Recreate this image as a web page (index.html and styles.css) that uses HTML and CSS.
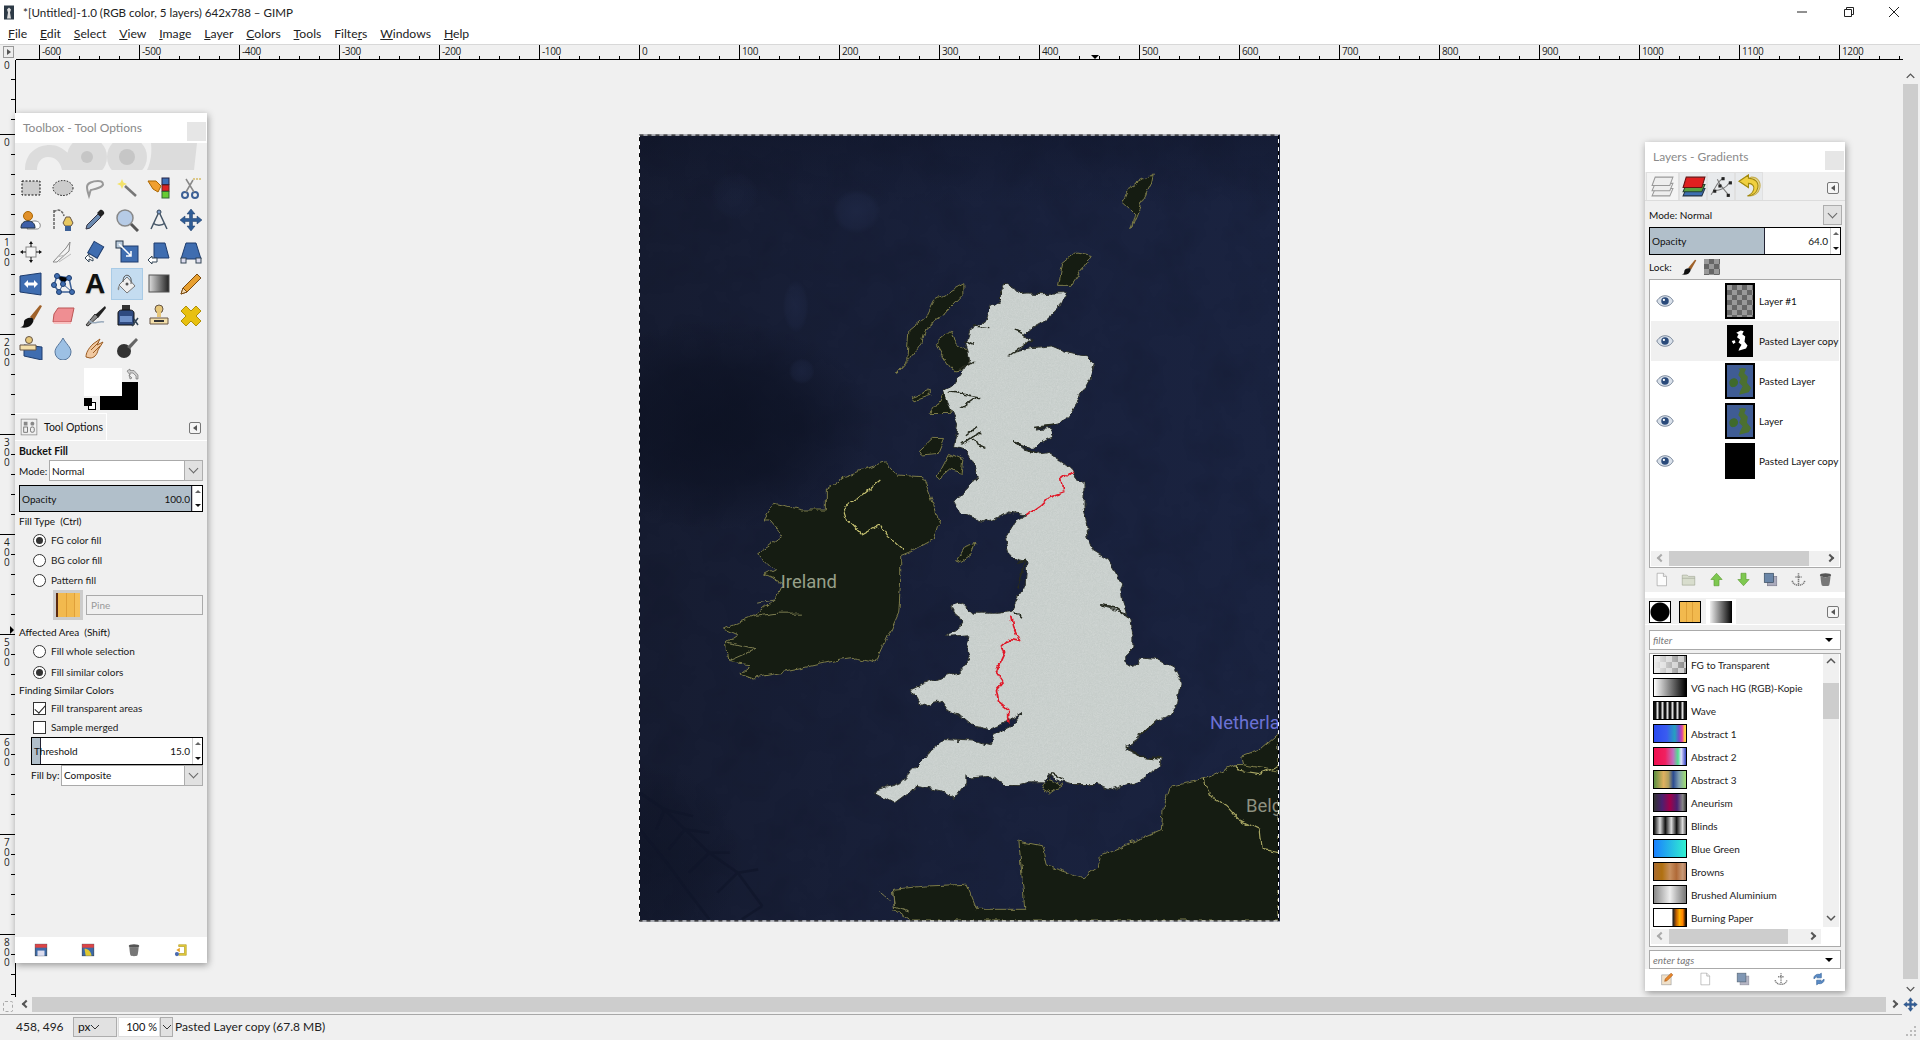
FILE: index.html
```html
<!DOCTYPE html>
<html lang="en">
<head>
<meta charset="utf-8">
<title>GIMP</title>
<link rel="stylesheet" href="styles.css">
</head>
<body>
<svg class="defs" width="0" height="0" aria-hidden="true">
<defs>
<symbol id="i-rect" viewBox="0 0 24 24"><rect x="3" y="5" width="18" height="14" fill="#ccc" stroke="#111" stroke-dasharray="2 1.5"/></symbol>
<symbol id="i-ell" viewBox="0 0 24 24"><ellipse cx="12" cy="12" rx="10" ry="7.5" fill="#ccc" stroke="#111" stroke-dasharray="1.5 1.5"/></symbol>
<symbol id="i-lasso" viewBox="0 0 24 24"><path d="M4 11c0-4 6-6 11-6s6 3 4 5-7 3-11 4c-1 1-1 3-2 6-1-3-2-6-2-9z" fill="none" stroke="#999" stroke-width="2"/></symbol>
<symbol id="i-wand" viewBox="0 0 24 24"><path d="M10 10l11 10" stroke="#777" stroke-width="2.500"/><path d="M7 3l1.500 3.500L12 8 8.500 9.500 7 13 5.500 9.500 2 8l3.500-1.500z" fill="#f4e36a"/></symbol>
<symbol id="i-fuzzy" viewBox="0 0 24 24"><rect x="15" y="2" width="7" height="6.500" fill="#3c6eb4" stroke="#224"/><rect x="15" y="9" width="7" height="6" fill="#d22" stroke="#622"/><rect x="15" y="15.500" width="7" height="6.500" fill="#6c3" stroke="#363"/><path d="M1 5h8l5 5-3 6-5-3z" fill="#f0a030" stroke="#a60"/></symbol>
<symbol id="i-sciss" viewBox="0 0 24 24"><circle cx="6" cy="19" r="3" fill="none" stroke="#3c6096" stroke-width="2"/><circle cx="16" cy="19" r="3" fill="none" stroke="#3c6096" stroke-width="2"/><path d="M7 16L14 4M15 16L7 3" stroke="#888" stroke-width="1.500"/><path d="M14 3h8" stroke="#c8a020" stroke-dasharray="2 1"/></symbol>
<symbol id="i-fg" viewBox="0 0 24 24"><path d="M12 14c3-2 8-1 9 2s-1 5-3 5H8z" fill="#fff" stroke="#888"/><circle cx="9" cy="8" r="4.500" fill="#e0902a" stroke="#a60"/><path d="M2 20c0-5 3-7 7-7s7 2 7 7z" fill="#3d5fa8" stroke="#234"/></symbol>
<symbol id="i-path" viewBox="0 0 24 24"><path d="M3 2v20M3 4c3-3 8-3 10 4" fill="none" stroke="#666" stroke-dasharray="3 1" stroke-width="1.500"/><path d="M15 9l4 0 3 6-2 3h-6l-2-3z" fill="#e8c860" stroke="#654"/><rect x="14" y="18" width="6" height="5" fill="#3c6096"/></symbol>
<symbol id="i-pick" viewBox="0 0 24 24"><path d="M3 21l1-4L15 6l3 3L7 20z" fill="#6b8ab0" stroke="#334"/><path d="M14 5l3-3c2-1 5 2 4 4l-3 3z" fill="#222"/></symbol>
<symbol id="i-zoom" viewBox="0 0 24 24"><circle cx="10" cy="10" r="8" fill="#b6cbe6" stroke="#888" stroke-width="1.500"/><path d="M16 16l7 7" stroke="#555" stroke-width="3"/></symbol>
<symbol id="i-comp" viewBox="0 0 24 24"><circle cx="12" cy="4" r="2" fill="#7c9cc8" stroke="#345"/><path d="M11 6L4 21M13 6l7 15M6 15c3 3 9 3 12 0" fill="none" stroke="#456" stroke-width="1.500"/></symbol>
<symbol id="i-move" viewBox="0 0 24 24"><path d="M12 1l4 5h-2.500v4.500H18V8l5 4-5 4v-2.500h-4.500V18H16l-4 5-4-5h2.500v-4.500H6V16l-5-4 5-4v2.500h4.500V6H8z" fill="#2f5c96" stroke="#1a3a66" stroke-width=".5"/></symbol>
<symbol id="i-align" viewBox="0 0 24 24"><rect x="7" y="7" width="10" height="10" fill="#f6f6f6" stroke="#888"/><path d="M12 1l2 3h-4zM12 23l-2-3h4zM1 12l3-2v4zM23 12l-3 2v-4z" fill="#111"/><path d="M12 4v3M12 17v3M4 12h3M17 12h3" stroke="#111"/></symbol>
<symbol id="i-crop" viewBox="0 0 24 24"><path d="M2 22L15 8l4-6-1 9L6 22z" fill="#f4f4f4" stroke="#888"/><path d="M8 22l12-8M6 17l8-2" stroke="#bbb"/></symbol>
<symbol id="i-rot" viewBox="0 0 24 24"><rect x="7" y="3" width="11" height="13" transform="rotate(30 12 10)" fill="#3f6db0" stroke="#1e3d6e"/><path d="M2 18l4-4v2.500l4 2V21l-4-2v3z" fill="#fff" stroke="#345"/></symbol>
<symbol id="i-scale" viewBox="0 0 24 24"><rect x="6" y="6" width="17" height="16" fill="#3f6db0" stroke="#1e3d6e"/><rect x="1" y="1" width="7" height="7" fill="#bcd" stroke="#234"/><path d="M4 4l12 12m0-5v5h-5" fill="none" stroke="#fff" stroke-width="1.500"/></symbol>
<symbol id="i-shear" viewBox="0 0 24 24"><path d="M7 3h11l4 15H7z" fill="#3f6db0" stroke="#1e3d6e"/><path d="M1 20l4-4v2h5v4H5v2z" fill="#fff" stroke="#345"/></symbol>
<symbol id="i-persp" viewBox="0 0 24 24"><path d="M7 3h10l5 16H2z" fill="#3f6db0" stroke="#1e3d6e"/><rect x="2" y="18" width="5" height="5" fill="#dde" stroke="#345"/><rect x="17" y="18" width="5" height="5" fill="#dde" stroke="#345"/></symbol>
<symbol id="i-flip" viewBox="0 0 24 24"><path d="M1 4l21-3v22L1 20z" fill="#3f6db0" stroke="#1e3d6e"/><path d="M5 12l4-4v2.500h6V8l4 4-4 4v-2.500H9V16z" fill="#fff"/></symbol>
<symbol id="i-cage" viewBox="0 0 24 24"><path d="M6 4l12 2 3 14H8L3 13z" fill="none" stroke="#3c6096" stroke-width="1.500"/><path d="M6 4l6 8 6-6M12 12l-4 8M12 12l9 8" stroke="#3c6096"/><g fill="#3f6db0" stroke="#1e3d6e"><circle cx="6" cy="4" r="2.500"/><circle cx="18" cy="6" r="2.500"/><circle cx="21" cy="20" r="2.500"/><circle cx="8" cy="20" r="2.500"/><circle cx="3" cy="13" r="2.500"/><circle cx="12" cy="12" r="2.500"/></g></symbol>
<symbol id="i-bucket" viewBox="0 0 24 24"><path d="M4 13l8-8 8 9-8 7z" fill="#eee" stroke="#777"/><path d="M8 10c0-6 3-8 6-6 3 2 2 6 2 8" fill="none" stroke="#555"/><circle cx="12" cy="12" r="1.500" fill="#555"/><path d="M4 13c-1 2-2 4-1 5s2-2 1-5" fill="#888"/></symbol>
<symbol id="i-blend" viewBox="0 0 24 24"><defs><linearGradient id="g-b"><stop offset="0" stop-color="#ddd"/><stop offset="1" stop-color="#222"/></linearGradient></defs><rect x="2" y="3" width="20" height="17" fill="url(#g-b)" stroke="#555"/></symbol>
<symbol id="i-pencil" viewBox="0 0 24 24"><path d="M2 22l2-6L18 2l4 4L8 20z" fill="#e8a030" stroke="#7a4a10"/><path d="M2 22l2-6 4 4z" fill="#f0d8b0" stroke="#7a4a10"/></symbol>
<symbol id="i-brush" viewBox="0 0 24 24"><path d="M11 13L21 1l2 1-8 14z" fill="#a0622a"/><path d="M1 23c3 0 4-2 4-5s5-5 8-4 1 6-2 8-7 2-10 1z" fill="#111"/></symbol>
<symbol id="i-eraser" viewBox="0 0 24 24"><path d="M7 4h16l-3 14H2l1-8z" fill="#ef8e92" stroke="#b55"/><path d="M2 18h18v2H3z" fill="#f8c0c0"/></symbol>
<symbol id="i-air" viewBox="0 0 24 24"><path d="M12 11L22 2l1 2-8 10z" fill="#222"/><path d="M3 21l9-11 3 3-10 9z" fill="#888" stroke="#333"/><path d="M6 16c4 6 10 0 15 2" fill="none" stroke="#9ab" stroke-width="1.500"/></symbol>
<symbol id="i-ink" viewBox="0 0 24 24"><rect x="7" y="1" width="8" height="6" fill="#333"/><path d="M3 9c0-2 2-3 4-3h8c2 0 4 1 4 3v12H3z" fill="#2f4a80" stroke="#111"/><rect x="5" y="12" width="12" height="6" fill="#6f90c8"/><path d="M17 22l6-8M19 15l4 6" stroke="#345" stroke-width="1.500"/></symbol>
<symbol id="i-clone" viewBox="0 0 24 24"><circle cx="12" cy="5" r="4" fill="#e6c77c" stroke="#654"/><rect x="10" y="8" width="4" height="5" fill="#e6c77c"/><path d="M3 14h18v6H3z" fill="#f3dfaa" stroke="#654"/><path d="M7 17h10" stroke="#333" stroke-width="2"/></symbol>
<symbol id="i-heal" viewBox="0 0 24 24"><path d="M2 7l5-5 5 5 5-5 5 5-5 5 5 5-5 5-5-5-5 5-5-5 5-5z" fill="#e8c010" stroke="#b09008" stroke-linejoin="round"/></symbol>
<symbol id="i-pclone" viewBox="0 0 24 24"><path d="M5 9l18 2v13L5 20z" fill="#3f6db0" stroke="#1e3d6e"/><circle cx="10" cy="4" r="3.500" fill="#e6c77c" stroke="#654"/><path d="M1 9h16v5H1z" fill="#f3dfaa" stroke="#654"/></symbol>
<symbol id="i-drop" viewBox="0 0 24 24"><path d="M12 2c3 6 8 9 8 14a8 8 0 0 1-16 0c0-5 5-8 8-14z" fill="#9cc0e4" stroke="#58779c"/></symbol>
<symbol id="i-smudge" viewBox="0 0 24 24"><path d="M3 21c0-4 2-8 7-13l7-5-3 6 6-3-5 8c-1 5-4 8-8 8z" fill="#f0c8a0" stroke="#9a5a20"/><path d="M8 14l8-8M10 17l7-7" stroke="#9a5a20"/></symbol>
<symbol id="i-dodge" viewBox="0 0 24 24"><circle cx="9" cy="15" r="7" fill="#333"/><path d="M12 11l9-9 2 2-8 9z" fill="#666"/></symbol>
<symbol id="i-opts" viewBox="0 0 24 24"><rect x="1.500" y="1.500" width="21" height="21" fill="none" stroke="#888"/><rect x="5" y="5" width="5" height="5" fill="#888"/><rect x="14" y="5" width="5" height="5" rx="2" fill="#888"/><rect x="5" y="12" width="5" height="7" fill="none" stroke="#555"/><rect x="14" y="12" width="5" height="7" rx="2" fill="none" stroke="#555"/></symbol>
<symbol id="i-conf" viewBox="0 0 12 12"><rect x=".5" y=".5" width="11" height="11" rx="1.500" fill="#f4f4f4" stroke="#777"/><path d="M8 3v6L4 6z" fill="#555"/></symbol>
<symbol id="i-layers" viewBox="0 0 24 24"><g fill="#eee" stroke="#999"><path d="M5 14h17l-3 7H2z"/><path d="M5 9h17l-3 7H2z"/><path d="M5 3h17l-3 8H2z"/></g></symbol>
<symbol id="i-chans" viewBox="0 0 24 24"><path d="M5 14h18l-3 7H2z" fill="#3c6eb4" stroke="#234"/><path d="M5 10h18l-3 7H2z" fill="#5aa040" stroke="#243"/><path d="M5 3h18l-3 10H2z" fill="#e02020" stroke="#611"/></symbol>
<symbol id="i-paths" viewBox="0 0 24 24"><path d="M2 20c4-6 6-14 12-16M8 5c3 8 8 10 11 16M20 8c-4 6-10 8-15 8" fill="none" stroke="#777"/><g fill="#222"><rect x="12" y="3" width="3" height="3"/><rect x="19" y="7" width="3" height="3"/><rect x="4" y="15" width="3" height="3"/><rect x="17" y="19" width="3" height="3"/><rect x="9" y="10" width="3" height="3"/></g></symbol>
<symbol id="i-undo" viewBox="0 0 24 24"><path d="M14 3c6 0 9 5 8 10s-6 9-11 8c5 0 8-4 7-8s-4-5-7-4v4L2 7l9-6v3z" fill="#e8d890" stroke="#c8b050"/><path d="M11 1L2 7l9 6V9c4 0 6 3 5 6s-3 5-6 6c5 0 9-3 10-8s-3-9-9-9z" fill="#f0d040" stroke="#a08810"/></symbol>
<symbol id="i-new" viewBox="0 0 24 24"><path d="M5 2h10l5 5v15H5z" fill="#fff" stroke="#888"/><path d="M15 2v5h5" fill="#eee" stroke="#888"/></symbol>
<symbol id="i-folder" viewBox="0 0 24 24"><path d="M2 5h8l2 2h10v14H2z" fill="#d4dac8" stroke="#909880"/><path d="M2 10h20" stroke="#909880"/></symbol>
<symbol id="i-up" viewBox="0 0 24 24"><path d="M12 2l9 10h-5v10H8V12H3z" fill="#7ec850" stroke="#5a9a30"/></symbol>
<symbol id="i-down" viewBox="0 0 24 24"><path d="M12 22l9-10h-5V2H8v10H3z" fill="#7ec850" stroke="#5a9a30"/></symbol>
<symbol id="i-dup" viewBox="0 0 24 24"><rect x="7" y="7" width="15" height="15" fill="#aab" stroke="#778"/><rect x="2" y="2" width="15" height="15" fill="#6a86a8" stroke="#345"/></symbol>
<symbol id="i-anchor" viewBox="0 0 24 24"><path d="M12 2v18M7 8h10M2 14c1 5 5 7 10 7s9-2 10-7" fill="none" stroke="#666" stroke-width="2.500" stroke-dasharray="2 1"/></symbol>
<symbol id="i-trash" viewBox="0 0 24 24"><ellipse cx="12" cy="5" rx="9" ry="3" fill="#555"/><path d="M4 6c0 3 1 12 2 15 2 2 10 2 12 0 1-3 2-12 2-15-3 3-13 3-16 0z" fill="#777"/></symbol>
<symbol id="i-edit" viewBox="0 0 24 24"><rect x="3" y="5" width="16" height="17" fill="#f0e0c8" stroke="#999"/><path d="M8 16l1-4L19 2l3 3-10 10z" fill="#e8872a" stroke="#a05010"/></symbol>
<symbol id="i-refresh" viewBox="0 0 24 24"><path d="M3 11c0-5 5-8 10-7l3-2v8h-8l2-2c-2-1-4 0-5 3z" fill="#5a8cc8" stroke="#2a5a90"/><path d="M21 13c0 5-5 8-10 7l-3 2v-8h8l-2 2c2 1 4 0 5-3z" fill="#5a8cc8" stroke="#2a5a90"/></symbol>
<symbol id="i-save" viewBox="0 0 24 24"><rect x="2" y="2" width="20" height="20" fill="#3d6aa8" stroke="#234"/><rect x="2" y="2" width="20" height="6" fill="#d44"/><rect x="6" y="13" width="12" height="9" fill="#dde"/></symbol>
<symbol id="i-restore" viewBox="0 0 24 24"><rect x="2" y="2" width="20" height="20" fill="#3d6aa8" stroke="#234"/><rect x="2" y="2" width="20" height="6" fill="#d44"/><path d="M6 10c6 0 11 4 12 12H8z" fill="#e0c830"/></symbol>
<symbol id="i-reset" viewBox="0 0 24 24"><path d="M8 3h13v18H8v-3h10V6H8z" fill="#e8d040" stroke="#a89010"/><path d="M4 12l6-4v8z" fill="#e8a020"/><circle cx="5" cy="19" r="3.500" fill="#4a6ab0"/></symbol>
<symbol id="i-eye" viewBox="0 0 24 24"><path d="M1 12c4-6 8-7 11-7s8 1 11 7c-3 6-8 7-11 7s-8-1-11-7z" fill="#d8e0ea" stroke="#5a6a80"/><circle cx="12" cy="12" r="5" fill="#2a4a7a"/><circle cx="10.500" cy="10.500" r="1.500" fill="#fff"/></symbol>
<symbol id="i-uk" viewBox="0 0 24 32"><path d="M13 2l4 1-2 4 4 3-1 7 4 5-2 4-10 3 1-3 3-5-4-3 2-4-4-3 2-4-3-2z" fill="#fff"/><path d="M1 16l4-1 1 3-3 2z" fill="#fff"/></symbol>
<symbol id="i-uk2" viewBox="0 0 30 36"><path d="M3 18c2-4 7-4 9-1s0 7-4 8-6-3-5-7z" fill="#3f6a2c"/><path d="M18 3l4 1-2 5 4 4-1 7 5 6-3 5-11 3 1-4 3-6-4-4 2-5-3-4 2-5-2-2z" fill="#4c7030"/></symbol>
</defs>
</svg>

<header class="titlebar">
  <svg class="appicon" viewBox="0 0 10 14" width="10" height="15"><rect width="10" height="14" fill="#2d3a46"/><path d="M3 13l1-6-1-3 2-2 2 2-1 3 1 6z" fill="#ddd"/></svg>
  <span class="titletext">*[Untitled]-1.0 (RGB color, 5 layers) 642x788 – GIMP</span>
  <div class="winctl">
    <svg width="46" height="20" viewBox="0 0 46 20"><path d="M18 10h10" stroke="#222"/></svg>
    <svg width="46" height="20" viewBox="0 0 46 20"><path d="M19.500 7.500h7v7h-7zM21.500 7.500v-2h7v7h-2" fill="none" stroke="#222"/></svg>
    <svg width="46" height="20" viewBox="0 0 46 20"><path d="M18 5l10 10M28 5L18 15" stroke="#222"/></svg>
  </div>
</header>
<nav class="menubar">
  <span><u>F</u>ile</span><span><u>E</u>dit</span><span><u>S</u>elect</span><span><u>V</u>iew</span><span><u>I</u>mage</span><span><u>L</u>ayer</span><span><u>C</u>olors</span><span><u>T</u>ools</span><span>Filte<u>r</u>s</span><span><u>W</u>indows</span><span><u>H</u>elp</span>
</nav>
<div class="rulerrow">
  <div class="corner"><svg width="11" height="12" viewBox="0 0 11 12"><rect x=".5" y=".5" width="10" height="11" fill="#eee" stroke="#999"/><path d="M4 3l4 3-4 3z" fill="#555"/></svg></div>
  <div class="hruler">
    <div class="hcell">-600</div><div class="hcell">-500</div><div class="hcell">-400</div><div class="hcell">-300</div><div class="hcell">-200</div><div class="hcell">-100</div><div class="hcell">0</div><div class="hcell">100</div><div class="hcell">200</div><div class="hcell">300</div><div class="hcell">400</div><div class="hcell">500</div><div class="hcell">600</div><div class="hcell">700</div><div class="hcell">800</div><div class="hcell">900</div><div class="hcell">1000</div><div class="hcell">1100</div><div class="hcell">1200</div>
    <i class="hmark"></i>
  </div>
  <div class="rulerend"></div>
</div>
<main class="mainrow">
  <div class="vruler">
    <div class="vcell vfirst"><b>0</b></div>
    <div class="vcell"><b>0</b></div>
    <div class="vcell"><b>100</b></div>
    <div class="vcell"><b>200</b></div>
    <div class="vcell"><b>300</b></div>
    <div class="vcell"><b>400</b></div>
    <div class="vcell"><b>500</b></div>
    <div class="vcell"><b>600</b></div>
    <div class="vcell"><b>700</b></div>
    <div class="vcell"><b>800</b></div>
    <i class="vmark"></i>
  </div>
  <div class="canvas">
    <svg class="map" viewBox="639 134 642 788" width="641" height="788" role="img" aria-label="Map of the British Isles">
      <defs>
        <linearGradient id="sea" x1="0" y1="0" x2="1" y2="0"><stop offset="0" stop-color="#161c31"/><stop offset=".55" stop-color="#19213c"/><stop offset="1" stop-color="#1a2340"/></linearGradient>
        <linearGradient id="topfade" x1="0" y1="0" x2="0" y2="1"><stop offset="0" stop-color="#0d1224" stop-opacity=".4"/><stop offset="1" stop-color="#0d1224" stop-opacity="0"/></linearGradient>
        <radialGradient id="deep"><stop offset="0" stop-color="#0b1020" stop-opacity=".8"/><stop offset=".55" stop-color="#0b1020" stop-opacity=".55"/><stop offset="1" stop-color="#0b1020" stop-opacity="0"/></radialGradient>
        <radialGradient id="bump"><stop offset="0" stop-color="#222c4c" stop-opacity=".8"/><stop offset=".75" stop-color="#222c4c" stop-opacity=".45"/><stop offset="1" stop-color="#222c4c" stop-opacity="0"/></radialGradient>
        <filter id="blur1" color-interpolation-filters="sRGB"><feGaussianBlur stdDeviation="1.200"/></filter>
        <filter id="mottle" color-interpolation-filters="sRGB" x="0" y="0" width="100%" height="100%"><feTurbulence type="fractalNoise" baseFrequency=".025" numOctaves="4" seed="11"/><feColorMatrix values="0 0 0 0 .03 0 0 0 0 .04 0 0 0 0 .09 0 0 0 1.400 -.55"/></filter>
        <filter id="jag" color-interpolation-filters="sRGB" x="0" y="0" width="100%" height="100%"><feTurbulence type="fractalNoise" baseFrequency=".09" numOctaves="3" seed="7" result="n"/><feDisplacementMap in="SourceGraphic" in2="n" scale="7" xChannelSelector="R" yChannelSelector="G"/></filter>
        <filter id="grain" color-interpolation-filters="sRGB" x="0" y="0" width="100%" height="100%"><feTurbulence type="fractalNoise" baseFrequency=".3" numOctaves="2" seed="4"/><feColorMatrix values="0 0 0 0 1 0 0 0 0 1 0 0 0 0 1 0 0 0 .3 -.08"/><feComposite in2="SourceAlpha" operator="in"/><feMerge><feMergeNode in="SourceGraphic"/><feMergeNode/></feMerge></filter>
      </defs>
      <rect x="639" y="134" width="642" height="788" fill="url(#sea)"/>
      <rect x="639" y="134" width="642" height="788" filter="url(#mottle)" opacity=".18"/>
      <rect x="639" y="134" width="642" height="70" fill="url(#topfade)"/>
      <ellipse cx="715" cy="425" rx="160" ry="105" fill="url(#deep)"/>
      <ellipse cx="650" cy="860" rx="90" ry="95" fill="url(#deep)" opacity=".55"/>
      <ellipse cx="857" cy="211" rx="24" ry="22" fill="url(#bump)" opacity=".7"/>
      <ellipse cx="796" cy="306" rx="13" ry="26" fill="url(#bump)" opacity=".6"/>
      <ellipse cx="802" cy="371" rx="13" ry="13" fill="url(#bump)" opacity=".6"/>
      <ellipse cx="735" cy="195" rx="24" ry="24" fill="url(#bump)" opacity=".25"/>
      <g class="ridges" filter="url(#blur1)" transform="translate(640 130) scale(.408 .3333)">
        <path d="M0 1990L60 2040 110 2100 170 2170 240 2230 300 2330M60 2040L40 2100M60 2040L130 2060M110 2100L70 2160M110 2100L170 2110M170 2170L120 2230M170 2170L220 2170M240 2230L190 2290M240 2230L290 2220M300 2330L250 2370M0 2100L60 2190 120 2290 170 2370"/>
      </g>
      <g filter="url(#jag)">
      <g class="landmap" transform="translate(640 130) scale(.408 .3333)">
        <!-- Europe -->
        <path class="land" d="M1568 1905L1460 1905 1385 1950 1300 1970 1285 2030 1280 2100 1130 2180 1125 2215 1090 2245 1000 2210 990 2150 930 2135 945 2340 825 2340 800 2265 700 2270 620 2280 625 2340 665 2375 1568 2375z"/>
        <path class="land" d="M1568 1810L1520 1860 1475 1880 1480 1905 1568 1925z"/>
        <path class="border" d="M1385 1950L1395 2000 1440 2030 1470 2070 1520 2100 1525 2160 1568 2170M1460 1905L1470 1925 1520 1935 1568 1910"/>
        <path class="border dim" d="M620 2280L625 2330 660 2345M590 2290L610 2310"/>
        <!-- Ireland -->
        <path class="land" d="M305 1170L330 1120 400 1140 455 1140 455 1080 500 1040 600 995 630 1035 695 1040 720 1120 735 1180 730 1190 720 1230 660 1270 640 1280 640 1350 635 1450 590 1570 580 1600 530 1585 470 1595 380 1620 280 1645 245 1630 270 1605 215 1595 210 1540 240 1515 205 1495 280 1460 330 1410 350 1360 305 1335 330 1320 290 1270 350 1215 320 1170z"/>
        <path class="border bright" d="M500 1130L530 1110 590 1050M510 1170L545 1215 590 1185 610 1220 650 1265M500 1130L510 1170"/>
        <path class="border dim" d="M215 1595L280 1560 215 1540M280 1460L340 1450 395 1450M330 1410L290 1420"/>
        <!-- Islands -->
        <g class="land">
          <path d="M795 460L795 490 740 560 700 590 690 640 660 690 630 730 655 690 660 600 700 560 720 510z"/>
          <path d="M725 640L765 600 775 640 815 670 800 720 770 725 745 680z"/>
          <path d="M710 850L745 790 790 800 760 850z"/>
          <path d="M685 965L720 925 745 925 730 970 690 975z"/>
          <path d="M730 1040L760 970 795 990 790 1030 760 1020 735 1045z"/>
          <path d="M668 800L715 780 715 795 675 812z"/>
          <path d="M1025 465L1035 400 1070 365 1110 375 1090 410 1060 465z"/>
          <path d="M1205 295L1215 250 1185 215 1200 170 1260 130 1255 160 1230 220 1215 265z"/>
          <path d="M780 1290L800 1250 825 1240 815 1275 790 1295z"/>
          <path d="M1000 1950L1040 1965 1010 1990 985 1970z"/>
        </g>
        <!-- Great Britain -->
        <path class="gb" filter="url(#grain)" d="M885 480L895 458 915 470 930 490 950 488 985 490 1040 487 1045 490 1030 530 990 575 955 600 945 610 960 625 940 650 925 665 960 655 1010 650 1040 665 1100 680 1115 700 1105 745 1085 790 1060 840 1030 880 1015 885 975 890 970 900 1010 895 1015 920 985 935 965 955 945 950 915 935 940 960 970 970 1000 965 1040 1000 1060 1020 1070 1050 1090 1065 1090 1130 1095 1170 1100 1225 1110 1260 1150 1290 1185 1360 1180 1380 1185 1415 1195 1450 1130 1428 1170 1435 1205 1465 1210 1520 1210 1555 1190 1580 1190 1595 1210 1610 1235 1585 1270 1590 1310 1615 1328 1660 1320 1720 1300 1760 1270 1775 1240 1800 1225 1830 1190 1860 1230 1880 1280 1885 1275 1915 1225 1955 1160 1980 1120 1965 1060 1965 1030 1955 1000 1935 990 1960 950 1960 930 1965 900 1965 860 1940 815 1945 800 1935 800 1960 770 2010 740 1985 680 1970 625 2020 580 1990 585 1980 640 1960 680 1910 715 1860 745 1830 830 1835 860 1845 870 1815 910 1790 940 1750 905 1775 860 1800 820 1790 790 1760 755 1740 740 1715 690 1730 665 1680 700 1660 780 1630 810 1590 800 1555 810 1515 750 1520 790 1485 765 1430 790 1420 815 1450 880 1450 915 1445 925 1415 945 1375 950 1300 920 1290 905 1270 895 1230 925 1170 950 1155 900 1145 870 1165 840 1175 790 1150 770 1115 800 1080 830 1040 820 1000 800 960 770 950 780 880 745 780 770 760 810 690 800 640 810 600 850 570 860 530 885 510z"/>
        <!-- Inlets -->
        <g class="inlet">
          <path d="M905 675L935 650 965 625M920 600L950 615"/>
          <path d="M965 895L1020 885M915 935L950 960 975 970"/>
          <path d="M815 590L860 595M795 630L820 645M780 720L820 690M760 785L830 800M790 835L830 800M790 945L835 905M815 930L850 950M825 895L800 920"/>
          <path d="M1130 1428L1170 1435 1200 1465M920 1445L935 1465M1000 1950L1010 1930 1040 1950"/>
          <path d="M1190 1850L1230 1880 1280 1885M1225 1820L1270 1770"/>
          <path d="M925 1300L945 1295 925 1375"/>
        </g>
        <!-- Red borders -->
        <path class="redline" d="M1060 1020L1035 1045 1040 1085 1005 1100 985 1125 950 1155"/>
        <path class="redline" d="M910 1460L915 1490 930 1535 910 1530 890 1550 895 1570 880 1610 875 1625 892 1655 875 1680 880 1715 905 1740 905 1780"/>
      </g>
      </g>
      <text class="lbl ireland" x="781" y="588">Ireland</text>
      <text class="lbl neth" x="1211" y="729">Netherlands</text>
      <text class="lbl belg" x="1247" y="812">Belgium</text>
      <rect class="ant-w" x="639.500" y="134.500" width="640" height="787"/>
      <rect class="ant-b" x="639.500" y="134.500" width="640" height="787"/>
    </svg>
  </div>
  <div class="vscroll">
    <svg class="arrow" width="16" height="14" viewBox="0 0 16 14"><path d="M4 9l4-4 4 4" fill="none" stroke="#555" stroke-width="1.500"/></svg>
    <div class="vthumb"></div>
    <svg class="arrow" width="16" height="14" viewBox="0 0 16 14"><path d="M4 5l4 4 4-4" fill="none" stroke="#555" stroke-width="1.500"/></svg>
  </div>

  <section class="dock toolbox">
    <div class="dtitle"><span>Toolbox - Tool Options</span><i class="dclose"></i></div>
    <svg class="wilber" width="192" height="27" viewBox="0 0 192 27"><path d="M10 27C10 10 22 2 35 2c8 0 12 3 18 8l8 17H47C45 18 40 14 33 14c-7 0-11 6-11 13z" fill="#dcdcdc"/><circle cx="72" cy="14" r="20" fill="#dcdcdc"/><circle cx="72" cy="14" r="6" fill="#c6c6c6"/><circle cx="112" cy="14" r="20" fill="#dcdcdc"/><circle cx="112" cy="14" r="8" fill="#c6c6c6"/><path d="M136 0h46l-3 27h-47c4-8 5-18 4-27z" fill="#dcdcdc"/></svg>
    <div class="toolgrid">
      <button class="tool"><svg><use href="#i-rect"/></svg></button>
      <button class="tool"><svg><use href="#i-ell"/></svg></button>
      <button class="tool"><svg><use href="#i-lasso"/></svg></button>
      <button class="tool"><svg><use href="#i-wand"/></svg></button>
      <button class="tool"><svg><use href="#i-fuzzy"/></svg></button>
      <button class="tool"><svg><use href="#i-sciss"/></svg></button>
      <button class="tool"><svg><use href="#i-fg"/></svg></button>
      <button class="tool"><svg><use href="#i-path"/></svg></button>
      <button class="tool"><svg><use href="#i-pick"/></svg></button>
      <button class="tool"><svg><use href="#i-zoom"/></svg></button>
      <button class="tool"><svg><use href="#i-comp"/></svg></button>
      <button class="tool"><svg><use href="#i-move"/></svg></button>
      <button class="tool"><svg><use href="#i-align"/></svg></button>
      <button class="tool"><svg><use href="#i-crop"/></svg></button>
      <button class="tool"><svg><use href="#i-rot"/></svg></button>
      <button class="tool"><svg><use href="#i-scale"/></svg></button>
      <button class="tool"><svg><use href="#i-shear"/></svg></button>
      <button class="tool"><svg><use href="#i-persp"/></svg></button>
      <button class="tool"><svg><use href="#i-flip"/></svg></button>
      <button class="tool"><svg><use href="#i-cage"/></svg></button>
      <button class="tool toola">A</button>
      <button class="tool active"><svg><use href="#i-bucket"/></svg></button>
      <button class="tool"><svg><use href="#i-blend"/></svg></button>
      <button class="tool"><svg><use href="#i-pencil"/></svg></button>
      <button class="tool"><svg><use href="#i-brush"/></svg></button>
      <button class="tool"><svg><use href="#i-eraser"/></svg></button>
      <button class="tool"><svg><use href="#i-air"/></svg></button>
      <button class="tool"><svg><use href="#i-ink"/></svg></button>
      <button class="tool"><svg><use href="#i-clone"/></svg></button>
      <button class="tool"><svg><use href="#i-heal"/></svg></button>
      <button class="tool"><svg><use href="#i-pclone"/></svg></button>
      <button class="tool"><svg><use href="#i-drop"/></svg></button>
      <button class="tool"><svg><use href="#i-smudge"/></svg></button>
      <button class="tool"><svg><use href="#i-dodge"/></svg></button>
    </div>
    <div class="colorarea">
      <i class="bgc"></i><i class="fgc"></i><i class="defbg"></i><i class="deffg"></i>
      <svg class="swap" width="13" height="13" viewBox="0 0 13 13"><path d="M1 3l3-2v1.500h4L12 7v4h-2V8L7 5H4v2zM3 7l3 3-2 1z" fill="#ccc" stroke="#666" stroke-width=".6"/></svg>
    </div>
    <div class="tabrow">
      <div class="tab tabwide"><svg class="tabicon"><use href="#i-opts"/></svg><span>Tool Options</span></div>
      <svg class="conf"><use href="#i-conf"/></svg>
    </div>
    <div class="opts">
      <div class="h19 strong">Bucket Fill</div>
      <div class="frow h21"><span class="lab">Mode:</span><div class="combo"><span>Normal</span><i class="comboarrow"></i></div></div>
      <div class="spinscale sp-top">
        <i class="fill f100"></i><span class="sl">Opacity</span><span class="sv">100.0</span>
        <div class="spin"><i class="up"></i><i class="dn"></i></div>
      </div>
      <div class="grp h18">Fill Type&nbsp; (Ctrl)</div>
      <div class="ropt"><i class="radio on"></i>FG color fill</div>
      <div class="ropt"><i class="radio"></i>BG color fill</div>
      <div class="ropt"><i class="radio"></i>Pattern fill</div>
      <div class="patrow"><div class="pat"><i></i></div><div class="patname">Pine</div></div>
      <div class="grp h20">Affected Area&nbsp; (Shift)</div>
      <div class="ropt r21"><i class="radio"></i>Fill whole selection</div>
      <div class="ropt r21"><i class="radio on"></i>Fill similar colors</div>
      <div class="grp h17">Finding Similar Colors</div>
      <div class="ropt r19"><i class="check on"></i>Fill transparent areas</div>
      <div class="ropt r19"><i class="check"></i>Sample merged</div>
      <div class="spinscale thr">
        <i class="fill f5"></i><span class="sl">Threshold</span><span class="sv">15.0</span>
        <div class="spin"><i class="up"></i><i class="dn"></i></div>
      </div>
      <div class="frow h21 fillby"><span class="lab">Fill by:</span><div class="combo"><span>Composite</span><i class="comboarrow"></i></div></div>
    </div>
    <div class="dfoot foot4">
      <svg><use href="#i-save"/></svg><svg><use href="#i-restore"/></svg><svg><use href="#i-trash"/></svg><svg><use href="#i-reset"/></svg>
    </div>
  </section>

  <section class="dock layersdock">
    <div class="dtitle"><span>Layers - Gradients</span><i class="dclose"></i></div>
    <div class="tabrow ltabs">
      <div class="tab cur"><svg><use href="#i-layers"/></svg></div>
      <div class="tab"><svg><use href="#i-chans"/></svg></div>
      <div class="tab"><svg><use href="#i-paths"/></svg></div>
      <div class="tab"><svg><use href="#i-undo"/></svg></div>
      <svg class="conf"><use href="#i-conf"/></svg>
    </div>
    <div class="lbody">
      <div class="frow lmode"><span>Mode:&nbsp;Normal</span><i class="comboarrow solo"></i></div>
      <div class="spinscale lop">
        <i class="fill f64"></i><span class="sl">Opacity</span><span class="sv">64.0</span>
        <div class="spin"><i class="up"></i><i class="dn"></i></div>
      </div>
      <div class="lockrow"><span>Lock:</span><svg width="16" height="16"><use href="#i-brush"/></svg><i class="checker lockc"></i></div>
      <div class="listbox layerlist">
        <div class="lrows">
          <div class="lrow"><svg class="eye"><use href="#i-eye"/></svg><div class="thumb checker tb"></div><span>Layer #1</span></div>
          <div class="lrow sel"><svg class="eye"><use href="#i-eye"/></svg><div class="thumb blk"><svg width="18" height="24"><use href="#i-uk"/></svg></div><span>Pasted Layer copy</span></div>
          <div class="lrow"><svg class="eye"><use href="#i-eye"/></svg><div class="thumb blu tb"><svg width="26" height="32"><use href="#i-uk2"/></svg></div><span>Pasted Layer</span></div>
          <div class="lrow"><svg class="eye"><use href="#i-eye"/></svg><div class="thumb blu tb"><svg width="26" height="32"><use href="#i-uk2"/></svg></div><span>Layer</span></div>
          <div class="lrow"><svg class="eye"><use href="#i-eye"/></svg><div class="thumb blk tall"></div><span>Pasted Layer copy</span></div>
        </div>
        <div class="hscroll hs1"><b class="al"></b><i class="hthumb"></i><b class="ar"></b></div>
      </div>
      <div class="btnrow">
        <svg class="dis"><use href="#i-new"/></svg><svg class="dis"><use href="#i-folder"/></svg><svg><use href="#i-up"/></svg><svg><use href="#i-down"/></svg><svg><use href="#i-dup"/></svg><svg class="dis"><use href="#i-anchor"/></svg><svg><use href="#i-trash"/></svg>
      </div>
    </div>
    <div class="lsep"></div>
    <div class="tabrow gtabs">
      <div class="gt"><i class="gtb brushprev"></i></div>
      <div class="gt"><i class="gtb pineprev"></i></div>
      <div class="gt cur"><i class="gtb gradprev"></i></div>
      <svg class="conf"><use href="#i-conf"/></svg>
    </div>
    <div class="lbody">
      <div class="tagentry t-filter"><em>filter</em><i class="tri"></i></div>
      <div class="listbox gradlist">
        <div class="gmain">
          <div class="grows">
            <div class="grow"><i class="gp g1"></i>FG to Transparent</div>
            <div class="grow"><i class="gp g2"></i>VG nach HG (RGB)-Kopie</div>
            <div class="grow"><i class="gp g3"></i>Wave</div>
            <div class="grow"><i class="gp g4"></i>Abstract 1</div>
            <div class="grow"><i class="gp g5"></i>Abstract 2</div>
            <div class="grow"><i class="gp g6"></i>Abstract 3</div>
            <div class="grow"><i class="gp g7"></i>Aneurism</div>
            <div class="grow"><i class="gp g8"></i>Blinds</div>
            <div class="grow"><i class="gp g9"></i>Blue Green</div>
            <div class="grow"><i class="gp g10"></i>Browns</div>
            <div class="grow"><i class="gp g11"></i>Brushed Aluminium</div>
            <div class="grow"><i class="gp g12"></i>Burning Paper</div>
          </div>
          <div class="gvs">
            <svg class="arrow" width="16" height="14" viewBox="0 0 16 14"><path d="M4 9l4-4 4 4" fill="none" stroke="#555" stroke-width="1.500"/></svg>
            <i class="gvthumb"></i>
            <svg class="arrow gvdown" width="16" height="14" viewBox="0 0 16 14"><path d="M4 5l4 4 4-4" fill="none" stroke="#555" stroke-width="1.500"/></svg>
          </div>
        </div>
        <div class="hscroll hs2"><b class="al"></b><i class="hthumb"></i><b class="ar"></b></div>
      </div>
      <div class="tagentry t-tags"><em>enter tags</em><i class="tri"></i></div>
    </div>
    <div class="dfoot foot5">
      <svg><use href="#i-edit"/></svg><svg class="dis"><use href="#i-new"/></svg><svg class="dis2"><use href="#i-dup"/></svg><svg class="dis2"><use href="#i-anchor"/></svg><svg><use href="#i-refresh"/></svg>
    </div>
  </section>
</main>
<div class="bscrollrow">
  <div class="qmask"></div>
  <div class="bscroll"><b class="al dark"></b><i class="bthumb"></i><b class="ar"></b></div>
  <svg class="nav"><use href="#i-move"/></svg>
</div>
<footer class="statusbar">
  <span class="coords">458, 496</span>
  <div class="unit">px<svg width="10" height="6" viewBox="0 0 10 6"><path d="M1 1l4 4 4-4" fill="none" stroke="#333"/></svg></div>
  <div class="zoomval"><span>100 %</span></div>
  <div class="zoomarrow"><svg width="10" height="6" viewBox="0 0 10 6"><path d="M1 1l4 4 4-4" fill="none" stroke="#333"/></svg></div>
  <span class="stat">Pasted Layer copy (67.8 MB)</span>
  <svg class="grip" width="12" height="12" viewBox="0 0 12 12"><g fill="#bbb"><rect x="9" y="1" width="2" height="2"/><rect x="5" y="5" width="2" height="2"/><rect x="9" y="5" width="2" height="2"/><rect x="1" y="9" width="2" height="2"/><rect x="5" y="9" width="2" height="2"/><rect x="9" y="9" width="2" height="2"/></g></svg>
</footer>
</body>
</html>
```

FILE: styles.css
```css
* { box-sizing: border-box; }
html, body { margin: 0; padding: 0; }
body {
  width: 1920px; height: 1040px; overflow: hidden; display: flex; flex-direction: column;
  background: #f0f0f0; color: #111;
  font: 12px Lato, "Open Sans", "Liberation Sans", sans-serif;
  position: relative;
}
.defs { position: absolute; }
i { display: block; font-style: normal; }
svg { display: block; flex: none; }

.titlebar { height: 24px; display: flex; align-items: center; background: #fff; padding-left: 4px; }
.titletext { margin-left: 9px; font-size: 11.600px; color: #222; }
.winctl { margin-left: auto; display: flex; margin-right: 3px; gap: 0; }
.menubar { height: 20px; display: flex; align-items: center; padding: 0 0 1px 8px; background: #fff; font-size: 12.200px; gap: 12.900px; color: #222; }
.menubar u { text-underline-offset: 1px; }

.rulerrow { height: 16px; display: flex; background: #f0f0f0; border-top: 1px solid #d8d8d8; }
.corner { width: 16px; padding: 1px 0 0 3px; }
.hruler { position: relative; flex: 1; display: flex; padding-left: 23px; overflow: hidden; border-bottom: 1px solid #000; }
.hcell {
  flex: 0 0 100px; height: 14px; padding-left: 2px; border-left: 1px solid #000;
  font: 10px/13px "Open Sans", sans-serif; letter-spacing: -.4px; color: #222;
  background: repeating-linear-gradient(90deg, transparent 0, transparent 19px, #000 19px, #000 20px) 0 100% / 100% 3px no-repeat;
}
.hmark { position: absolute; left: 1075px; bottom: 0; border: 4px solid transparent; border-top-color: #000; border-bottom: 0; }
.rulerend { width: 17px; }

.mainrow { height: 937px; display: flex; position: relative; }
.vruler { width: 16px; position: relative; overflow: hidden; border-right: 1px solid #000; flex: none; }
.vcell {
  height: 100px; padding: 2px 0 0 4px; border-top: 1px solid #000; font: 10px/10px "Open Sans", sans-serif; color: #222;
  background: repeating-linear-gradient(180deg, transparent 0, transparent 19px, #000 19px, #000 20px) 100% 0 / 4px 100% no-repeat;
}
.vcell b { display: block; font-weight: 400; line-height: 10px; width: 7px; word-break: break-all; }
.vfirst { height: 74px; border-top: 0; padding-top: 0; background-position: 100% 0; margin-top: 0; }
.vmark { position: absolute; left: 10px; top: 566px; border: 4px solid transparent; border-left-color: #000; border-right: 0; }

.canvas { flex: 1; display: flex; align-items: center; justify-content: center; padding-bottom: 1px; padding-right: 1px; overflow: hidden; }
.gb { fill: #c6cdca; stroke: #20241c; stroke-width: 1; vector-effect: non-scaling-stroke; }
.land, .land path { fill: #151c12; stroke: #7c7b48; stroke-width: 1; vector-effect: non-scaling-stroke; }
.border { fill: none; stroke: #a8a663; stroke-width: 1.200; vector-effect: non-scaling-stroke; }
.border.bright { stroke: #c4c070; }
.border.dim { stroke: #7d7d50; stroke-width: 1; }
.inlet path { fill: none; stroke: #262a1e; stroke-width: 1.500; vector-effect: non-scaling-stroke; }
.redline { fill: none; stroke: #e01828; stroke-width: 1.700; vector-effect: non-scaling-stroke; }
.ridges path { fill: none; stroke: #10162a; stroke-width: 2.500; vector-effect: non-scaling-stroke; opacity: .7; }
.lbl { font: 18.500px Roboto, "Liberation Sans", sans-serif; }
.ireland { fill: #97a08a; }
.neth { fill: #6c72d4; }
.belg { fill: #8d9180; }
.ant-w { fill: none; stroke: #fff; stroke-width: 1; }
.ant-b { fill: none; stroke: #000; stroke-width: 1; stroke-dasharray: 4 4; }

.vscroll { width: 17px; display: flex; flex-direction: column; flex: none; padding: 8px 2px 0 0; align-items: center; }
.vthumb { width: 15px; flex: 1; background: #cdcdcd; margin: 0 0 2px; }
.vscroll .arrow { width: 15px; height: 16px; }

.dock { position: absolute; background: #f0f0f0; box-shadow: 1px 2px 7px rgba(0,0,0,.38); display: flex; flex-direction: column; }
.toolbox { left: 15px; top: 53px; width: 192px; height: 850px; }
.layersdock { left: 1645px; top: 82px; width: 200px; height: 849px; }
.dtitle { height: 30px; flex: none; background: #fff; color: #8a8a8a; display: flex; align-items: center; padding: 0 0 1px 8px; font-size: 12px; position: relative; }
.dclose { position: absolute; right: 1px; top: 9px; width: 19px; height: 19px; background: #e6e6e6; }
.wilber { overflow: hidden; }

.toolgrid { display: grid; grid-template-columns: repeat(6, 32px); grid-auto-rows: 32px; margin-top: 2px; }
.tool { border: 1px solid transparent; padding: 0; margin: 0; background: none; display: flex; align-items: center; justify-content: center; }
.tool svg { width: 24px; height: 24px; }
.tool.active { background: #c4dcf0; border-color: #a9cbe6; }
.toola { font: 700 28px/30px "Liberation Sans", sans-serif; color: #111; text-shadow: 0 1px 1px #999; }

.colorarea { height: 49px; position: relative; flex: none; }
.colorarea i { position: absolute; }
.fgc { left: 69px; top: 4px; width: 38px; height: 28px; background: #fff; }
.bgc { left: 85px; top: 18px; width: 38px; height: 28px; background: #000; }
.defbg { left: 73px; top: 38px; width: 8px; height: 8px; background: #fff; border: 1px solid #000; }
.deffg { left: 69px; top: 34px; width: 8px; height: 8px; background: #000; }
.swap { position: absolute; left: 111px; top: 4px; }

.tabrow { flex: none; display: flex; align-items: center; position: relative; }
.tab { display: flex; align-items: center; justify-content: center; }
.toolbox .tabrow { height: 28px; border-bottom: 1px solid #fff; }
.tabwide { width: 92px; height: 100%; background: #f0f0f0; border-top: 1px solid #fff; border-right: 1px solid #fff; justify-content: flex-start; padding-left: 5px; gap: 6px; font-size: 10.500px; white-space: nowrap; }
.tabicon { width: 18px; height: 18px; }
.conf { width: 12px; height: 12px; position: absolute; right: 6px; top: 9px; }

.opts { flex: 1; padding: 0 4px; font-size: 10px; display: flex; flex-direction: column; }
.h19 { height: 19px; flex: none; display: flex; align-items: center; }
.strong { font-weight: 700; font-size: 10.500px; }
.h21 { height: 21px; flex: none; }
.frow { display: flex; align-items: center; }
.lab { width: 30px; flex: none; white-space: nowrap; }
.combo { flex: 1; height: 21px; border: 1px solid #aaa; background: #fff; display: flex; align-items: center; padding-left: 2px; position: relative; }
.comboarrow { position: relative; width: 19px; height: 20px; background: #e1e1e1; border: 1px solid #adadad; flex: none; }
.combo .comboarrow { position: absolute; right: -1px; top: -1px; height: 21px; }
.comboarrow::after { content: ""; position: absolute; left: 5px; top: 4px; width: 6px; height: 6px; border: solid #666; border-width: 0 1px 1px 0; transform: rotate(45deg); }

.spinscale { flex: none; height: 27px; border: 1px solid #000; background: #fff; display: flex; align-items: center; justify-content: space-between; position: relative; padding: 0 12px 0 2px; }
.sp-top { margin-top: 4px; }
.spinscale .fill { position: absolute; left: 0; top: 0; bottom: 0; background: #b1bfca; border-right: 1px solid #223; }
.f100 { width: 172px; }
.f5 { width: 9px; }
.f64 { width: 115px; }
.sl, .sv { position: relative; }
.spin { position: absolute; right: 0; top: 0; bottom: 0; width: 10px; background: #fff; border-left: 1px solid #ccc; display: flex; flex-direction: column; justify-content: space-between; padding: 4px 0; align-items: center; }
.spin .up { width: 0; height: 0; border: 3.500px solid transparent; border-bottom-color: #666; border-top: 0; }
.spin .dn { width: 0; height: 0; border: 3.500px solid transparent; border-top-color: #111; border-bottom: 0; }

.grp { flex: none; }
.h18 { height: 18px; padding-top: 3px; }
.h20 { height: 21px; padding-top: 6px; }
.h17 { height: 16px; padding-top: 1px; }
.ropt { flex: none; height: 20px; padding-left: 14px; display: flex; align-items: center; gap: 5px; color: #222; }
.r21 { height: 21px; }
.r19 { height: 19px; }
.radio { width: 13px; height: 13px; border: 1px solid #333; border-radius: 50%; background: #fff; position: relative; }
.radio.on::after { content: ""; position: absolute; inset: 2px; border-radius: 50%; background: #333; }
.check { width: 13px; height: 13px; border: 1px solid #333; background: #fff; position: relative; }
.check.on::after { content: ""; position: absolute; left: 3px; top: 0; width: 5px; height: 9px; border: solid #222; border-width: 0 1px 1px 0; transform: rotate(42deg); }
.patrow { flex: none; height: 29.500px; display: flex; align-items: center; padding-left: 34px; gap: 3px; }
.pat { width: 30px; height: 30px; background: #ccc; padding: 3px; flex: none; }
.pat i { height: 100%; background: linear-gradient(90deg, #5a2a10 0 8%, #f2b94e 8% 40%, #e0a038 40% 44%, #f2b94e 44% 75%, #dfa03a 75% 78%, #f6c05a 78%); }
.patname { flex: 1; height: 20px; border: 1px solid #aaa; color: #999; display: flex; align-items: center; padding-left: 4px; }
.thr { height: 28px; margin-left: 12px; }
.fillby { margin-left: 12px; }

.dfoot { flex: none; background: #fff; display: flex; align-items: center; }
.dfoot svg { width: 14px; height: 14px; }
.foot4 { height: 26px; padding: 0 3px; display: grid; grid-template-columns: repeat(4, 1fr); justify-items: center; }
.foot5 { flex: 1; padding: 0 0 3px 15px; gap: 24px; }
.dis { opacity: .85; }
.dis2 { opacity: .85; }

.ltabs { height: 29px; border-bottom: 1px solid #dcdcdc; padding-left: 1px; }
.ltabs .tab { width: 28px; height: 28px; background: #e8eaec; border: 1px solid #e0e0e0; border-bottom: 0; }
.ltabs .tab.cur { background: #f4f4f4; width: 33px; }
.ltabs .tab svg { width: 25px; height: 25px; }
.ltabs .conf { width: 12px; height: 12px; top: 10px; right: 6px; }
.lbody { padding: 0 4px; font-size: 10px; flex: none; }
.lmode { height: 26px; justify-content: space-between; padding-top: 2px; }
.lmode .solo { margin-right: -1px; }
.lop { height: 28px; }
.lockrow { height: 24px; display: flex; align-items: center; gap: 9px; }
.checker { background: #999 conic-gradient(#666 25%, #999 0 50%, #666 0 75%, #999 0) 0 0 / 10px 10px; }
.lockc { width: 16px; height: 16px; margin-left: -2px; }
.listbox { border: 1px solid #aaa; background: #fff; display: flex; flex-direction: column; }
.layerlist { height: 289px; }
.lrows { flex: 1; padding: 1px 1px 0; }
.lrow { height: 40px; display: flex; align-items: center; position: relative; }
.lrow.sel { background: #f0f0f0; }
.lrow span { position: absolute; left: 108px; white-space: nowrap; }
.eye { width: 18px; height: 18px; margin-left: 5px; }
.thumb { position: absolute; left: 74px; top: 2px; width: 30px; height: 36px; overflow: hidden; display: flex; align-items: center; justify-content: center; }
.tb { border: 2px solid #000; }
.blk { background: #000; top: 4px; height: 32px; left: 76px; width: 26px; }
.tall { left: 74px; width: 30px; top: 2px; height: 36px; }
.blu { background: #3f5c94; }
.hscroll { flex: none; height: 15px; display: flex; align-items: center; margin: 0 1px; background: #f0f0f0; position: relative; }
.hs1 { margin-bottom: 1px; }
.hs1 .hthumb { left: 18px; width: 140px; }
.hs2 { margin-right: 19px; margin-bottom: 2px; }
.hs2 .hthumb { left: 18px; width: 119px; }
.hthumb { position: absolute; top: 0; bottom: 0; background: #cdcdcd; }
.al, .ar { position: absolute; top: 4px; width: 6px; height: 6px; border: solid #aaa; border-width: 0 0 2px 2px; transform: rotate(45deg); }
.al { left: 7px; }
.ar { right: 6px; border-color: #555; transform: rotate(-135deg); }
.btnrow { height: 24px; display: flex; align-items: center; justify-content: space-between; padding: 0 8px 2px 5px; }
.btnrow svg { width: 15px; height: 15px; }
.lsep { height: 6px; background: #fff; flex: none; }
.gtabs { height: 27px; border-bottom: 1px solid #fff; gap: 6px; padding-left: 3px; }
.gt { width: 24px; height: 26px; display: flex; align-items: center; justify-content: center; margin-top: 1px; }
.gt.cur { background: #fff; width: 30px; margin-left: -2px; }
.gtb { width: 22px; height: 22px; border: 1px solid #000; }
.brushprev { background: radial-gradient(circle, #000 0 9px, #fff 10px); }
.pineprev { background: linear-gradient(90deg, #f2b94e 0 30%, #dea038 30% 34%, #f2b94e 34% 60%, #dea038 60% 63%, #f2b94e 63%); }
.gradprev { background: linear-gradient(90deg, #eee, #000); border: 0; }
.gtabs .conf { top: 8px; }
.tagentry { height: 20px; border: 1px solid #aaa; background: #fff; display: flex; align-items: center; justify-content: space-between; padding: 0 7px 0 3px; color: #777; }
.t-filter { margin-top: 5px; }
.t-tags { margin-top: 3px; height: 19px; }
.tagentry em { font-size: 10px; }
.tri { width: 0; height: 0; border: 4px solid transparent; border-top: 4px solid #000; border-bottom: 0; border-left-width: 4px; }
.gradlist { margin-top: 3px; height: 294px; }
.gmain { flex: 1; display: flex; overflow: hidden; min-height: 0; }
.grows { flex: 1; padding: 0 0 0 3px; overflow: hidden; margin-top: -1px; }
.grow { height: 23px; display: flex; align-items: center; gap: 4px; color: #222; white-space: nowrap; }
.gp { width: 34px; height: 19px; border: 1px solid #000; flex: none; }
.g1 { background: linear-gradient(90deg, #eee, rgba(255,255,255,0)), #aaa conic-gradient(#888 25%, #ccc 0 50%, #888 0 75%, #ccc 0) 0 0 / 12px 12px; }
.g2 { background: linear-gradient(90deg, #fff, #000); }
.g3 { background: repeating-linear-gradient(90deg, #111 0, #111 2px, #ddd 3px, #ddd 4px, #111 5px); }
.g4 { background: linear-gradient(90deg, #2a4af0 0, #3a5cf0 40%, #25a0c0 65%, #7050d0 78%, #e040a0 88%, #ffd040 96%); }
.g5 { background: linear-gradient(90deg, #f01050 0, #f02060 35%, #c070c0 60%, #50e090 75%, #e0e0ff 85%, #3040c0); }
.g6 { background: linear-gradient(90deg, #5a9040, #e0b060 30%, #b0a060 45%, #2a4a90 60%, #80a0b0 78%, #a0e070); }
.g7 { background: linear-gradient(90deg, #333, #4a2070 25%, #a0004a 50%, #4a2070 72%, #888 90%, #333); }
.g8 { background: repeating-linear-gradient(90deg, #111 0, #ddd 6px, #111 11.300px); }
.g9 { background: linear-gradient(90deg, #1a80ff, #30f0d0); }
.g10 { background: linear-gradient(90deg, #a86a30, #b07010 25%, #c89060 50%, #b06a38 70%, #c89a78 90%, #a87050); }
.g11 { background: linear-gradient(90deg, #888, #bbb 25%, #eee 50%, #bbb 70%, #777); }
.g12 { background: linear-gradient(90deg, #fff 55%, #222 60%, #c06000 70%, #ffb000 80%, #ff8000 90%, #000); }
.gvs { width: 16px; margin-right: 1px; background: #f0f0f0; flex: none; display: flex; flex-direction: column; position: relative; height: 273px; }
.gvs .arrow { flex: none; }
.gvthumb { height: 36px; background: #cdcdcd; margin-top: 15px; }
.gvdown { margin-top: auto; margin-bottom: 2px; }

.bscrollrow { height: 17px; display: flex; background: #f0f0f0; position: relative; flex: none; }
.qmask { flex: none; margin: 4px 0 2px 3px; border: 1px dashed #aaa; border-radius: 2px; width: 10px; }
.bscroll { flex: 1; margin-left: 3px; height: 15px; position: relative; }
.bthumb { position: absolute; left: 16px; right: 17px; top: 0; bottom: 0; background: #cdcdcd; }
.al.dark { left: 7px; border-color: #555; }
.nav { width: 15px; height: 15px; margin-right: 2px; }

.statusbar { height: 26px; flex: none; border-top: 1px solid #a8a8a8; display: flex; align-items: center; font-size: 12px; padding: 0 0 2px 16px; position: relative; margin-right: 18px; }
.coords { width: 57px; color: #222; }
.unit { width: 44px; height: 20px; background: #e1e1e1; border: 1px solid #adadad; display: flex; align-items: center; padding-left: 4px; gap: 0; }
.zoomval { width: 42px; height: 20px; background: #fff; border: 1px solid #ddd; text-align: right; padding-right: 2px; line-height: 18px; margin-left: 1px; font-size: 11px; }
.zoomarrow { width: 13px; height: 20px; background: #e1e1e1; border: 1px solid #adadad; display: flex; align-items: center; justify-content: center; }
.stat { margin-left: 2px; color: #222; }
.grip { position: absolute; right: -15px; top: 10px; }
```
